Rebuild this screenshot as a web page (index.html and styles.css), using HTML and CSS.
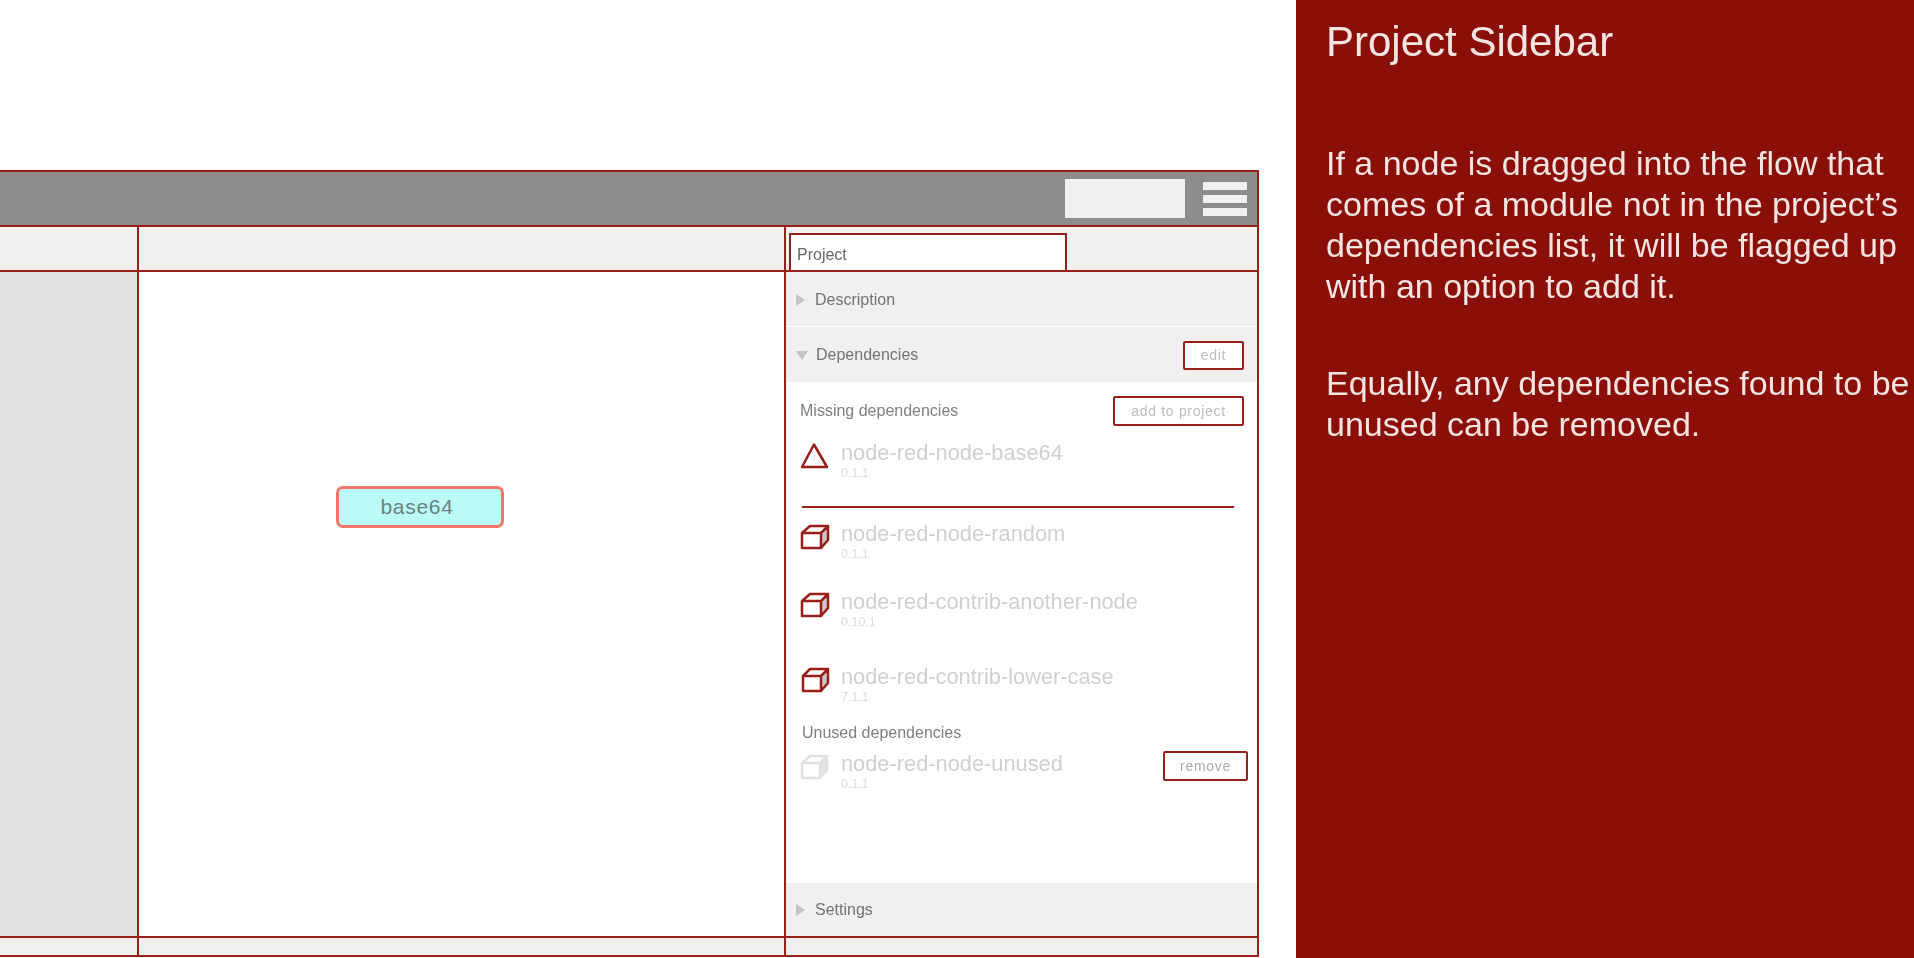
FILE: index.html
```html
<!DOCTYPE html>
<html lang="en">
<head>
    <meta charset="UTF-8">
    <meta name="viewport" content="width=device-width, initial-scale=1.0">
    <title>Project Sidebar</title>
    <link rel="stylesheet" href="styles.css">
</head>
<body>
    <div class="stage">
        <div class="window">
            <div class="header">
                <div class="search"></div>
                <div class="menu"><span></span><span></span><span></span></div>
            </div>

            <div class="row tabs">
                <div class="cell"></div>
                <div class="cell"></div>
                <div class="cell tab-cell"><div class="tab">Project</div></div>
            </div>

            <div class="row main">
                <div class="cell palette"></div>
                <div class="cell canvas">
                    <div class="node">base64</div>
                </div>
                <div class="cell sidebar">
                    <div class="section section-first"><i class="arrow"></i>Description</div>
                    <div class="section section-open">
                        <i class="arrow arrow-down"></i>Dependencies
                        <button class="btn btn-edit">edit</button>
                    </div>

                    <div class="deps">
                        <div class="deps-head">
                            <span>Missing dependencies</span>
                            <button class="btn btn-add">add to project</button>
                        </div>

                        <div class="dep dep-missing">
                            <svg class="dep-icon" width="30" height="26" viewBox="0 0 30 26">
                                <path class="line" d="M14 1.5 L27 24 H2 Z"/>
                                <path class="mark" d="M14 10 V18"/>
                            </svg>
                            <div>
                                <div class="dep-name">node-red-node-base64</div>
                                <div class="dep-version">0.1.1</div>
                            </div>
                        </div>

                        <div class="divider"></div>

                        <div class="dep dep-random">
                            <svg class="dep-icon" width="30" height="26" viewBox="0 0 30 26">
                                <path class="side" d="M21 9 L28 2 V16 L21 24 Z"/>
                                <path class="line" d="M2 9 H21 V24 H2 Z M2 9 L10 2 H28 L21 9 M28 2 V16 L21 24"/>
                            </svg>
                            <div>
                                <div class="dep-name">node-red-node-random</div>
                                <div class="dep-version">0.1.1</div>
                            </div>
                        </div>

                        <div class="dep dep-another">
                            <svg class="dep-icon" width="30" height="26" viewBox="0 0 30 26">
                                <path class="side" d="M21 9 L28 2 V16 L21 24 Z"/>
                                <path class="line" d="M2 9 H21 V24 H2 Z M2 9 L10 2 H28 L21 9 M28 2 V16 L21 24"/>
                            </svg>
                            <div>
                                <div class="dep-name">node-red-contrib-another-node</div>
                                <div class="dep-version">0.10.1</div>
                            </div>
                        </div>

                        <div class="dep dep-lower">
                            <svg class="dep-icon" width="30" height="26" viewBox="0 0 30 26">
                                <path class="side" d="M21 9 L28 2 V16 L21 24 Z"/>
                                <path class="line" d="M3 9 H21 V24 H3 Z M3 9 L10 2 H28 L21 9 M28 2 V16 L21 24"/>
                            </svg>
                            <div>
                                <div class="dep-name">node-red-contrib-lower-case</div>
                                <div class="dep-version">7.1.1</div>
                            </div>
                        </div>

                        <div class="unused-head">Unused dependencies</div>

                        <div class="dep dep-unused">
                            <svg class="dep-icon" width="30" height="26" viewBox="0 0 30 26">
                                <path class="side side-faint" d="M20 9 L27 2 V16 L20 24 Z"/>
                                <path class="line line-faint" d="M2 9 H20 V24 H2 Z M2 9 L10 2 H27 L20 9 M27 2 V16 L20 24"/>
                            </svg>
                            <div>
                                <div class="dep-name">node-red-node-unused</div>
                                <div class="dep-version">0.1.1</div>
                            </div>
                            <button class="btn btn-remove">remove</button>
                        </div>
                    </div>

                    <div class="section section-last"><i class="arrow"></i>Settings</div>
                </div>
            </div>

            <div class="row footer">
                <div class="cell"></div>
                <div class="cell"></div>
                <div class="cell"></div>
            </div>
        </div>
    </div>

    <div class="notes">
        <h1>Project Sidebar</h1>
        <p>If a node is dragged into the flow that comes of a module not in the project’s dependencies list, it will be flagged up with an option to add it.</p>
        <p>Equally, any dependencies found to be unused can be removed.</p>
    </div>
</body>
</html>
```

FILE: styles.css
```css
html, body {
    height: 100%;
}
body {
    margin: 0;
    display: flex;
    overflow: hidden;
    background-color: #fff;
    font-family: "Liberation Sans", Arial, sans-serif;
}
.stage {
    width: 1296px;
    flex: none;
    padding-top: 170px;
    filter: blur(0.7px);
}
/* window runs past the left edge of the page */
.window {
    width: 1269px;
    margin-left: -10px;
    border-top: 2px solid #981f1a;
}
.header {
    height: 53px;
    display: flex;
    align-items: center;
    justify-content: flex-end;
    padding-right: 10px;
    background-color: #8d8d8d;
    border-right: 2px solid #981f1a;
    border-bottom: 2px solid #981f1a;
}
.search {
    width: 120px;
    height: 39px;
    margin-right: 18px;
    background-color: #f0f0f0;
}
.menu {
    width: 44px;
    display: flex;
    flex-direction: column;
    gap: 5px;
}
.menu span {
    height: 8px;
    background-color: #f0f0f0;
}
.row {
    display: grid;
    grid-template-columns: 149px 647px 1fr;
    border-bottom: 2px solid #981f1a;
}
.cell {
    border-right: 2px solid #981f1a;
}
.tabs {
    height: 43px;
    background-color: #f0f0f0;
}
.tab-cell {
    padding: 6px 0 0 3px;
}
.tab {
    box-sizing: border-box;
    width: 278px;
    height: 37px;
    padding-left: 6px;
    line-height: 39px;
    font-size: 16px;
    color: #666;
    background-color: #fff;
    border: 2px solid #981f1a;
    border-bottom: none;
}
.main {
    height: 664px;
}
.palette {
    background-color: #e2e2e2;
}
.canvas {
    position: relative;
    background-color: #fff;
}
.node {
    position: absolute;
    left: 197px;
    top: 214px;
    width: 156px;
    height: 36px;
    padding-right: 6px;
    line-height: 36px;
    text-align: center;
    font-size: 21px;
    letter-spacing: 0.7px;
    color: #6a8080;
    background-color: #bbfcf7;
    border: 3px solid #f4766a;
    border-radius: 7px;
}
.sidebar {
    display: flex;
    flex-direction: column;
}
.section {
    display: flex;
    align-items: center;
    box-sizing: border-box;
    height: 54px;
    padding: 1px 13px 0 10px;
    font-size: 16px;
    color: #737373;
    background-color: #f0f0f0;
}
.section-first {
    margin-bottom: 1px;
}
.section-open {
    height: 55px;
}
.section-last {
    height: 53px;
    margin-top: auto;
}
.arrow {
    width: 0;
    height: 0;
    margin-right: 10px;
    border-left: 9px solid #c4c4c4;
    border-top: 6px solid transparent;
    border-bottom: 6px solid transparent;
}
.arrow-down {
    margin-right: 8px;
    border-top: 9px solid #c4c4c4;
    border-left: 6px solid transparent;
    border-right: 6px solid transparent;
    border-bottom: none;
}
.btn {
    height: 29px;
    padding: 0;
    font-family: inherit;
    font-size: 14px;
    letter-spacing: 0.7px;
    color: #bdbdbd;
    background-color: #fff;
    border: 2px solid #981f1a;
    border-radius: 2px;
}
.btn-edit {
    width: 61px;
    margin-left: auto;
}
.btn-add {
    width: 131px;
    height: 30px;
}
.btn-remove {
    width: 85px;
    height: 30px;
    margin: -3px -4px 0 auto;
    color: #aaa;
}
.deps {
    padding: 14px 13px 0 14px;
}
.deps-head {
    display: flex;
    align-items: center;
    justify-content: space-between;
    font-size: 16px;
    color: #808080;
}
.dep {
    display: flex;
    align-items: flex-start;
}
.dep-icon {
    flex: none;
    margin-right: 11px;
}
.line {
    fill: none;
    stroke: #981f1a;
    stroke-width: 2.5;
    stroke-linejoin: round;
}
.line-faint {
    stroke: #e0e0e0;
}
.mark {
    fill: none;
    stroke: #e4e4e4;
    stroke-width: 1;
}
.side {
    fill: #c8c8c8;
}
.side-faint {
    fill: #e4e4e4;
}
.dep-name {
    height: 21px;
    line-height: 20px;
    font-size: 21.8px;
    color: #d0d0d0;
}
.dep-version {
    height: 19px;
    line-height: 18px;
    font-size: 12.5px;
    color: #dcdcdc;
}
.dep-missing {
    margin-top: 17px;
}
.divider {
    height: 2px;
    margin: 23px 10px 0 2px;
    background-color: #981f1a;
}
.dep-random {
    margin-top: 16px;
}
.dep-another {
    margin-top: 28px;
}
.dep-lower {
    margin-top: 35px;
}
.unused-head {
    height: 20px;
    margin: 16px 0 0 2px;
    line-height: 19px;
    font-size: 16px;
    color: #808080;
}
.dep-unused {
    margin-top: 11px;
}
.footer {
    height: 17px;
    background-color: #f0f0f0;
}
.notes {
    flex: 1;
    min-width: 0;
    padding: 0 0 0 30px;
    color: #f4e4e2;
    background-color: #8a0f08;
}
.notes h1, .notes p {
    filter: blur(0.5px);
}
.notes h1 {
    margin: 18px 0 0;
    height: 48px;
    line-height: 48px;
    font-size: 42px;
    font-weight: normal;
}
.notes p {
    margin: 77px 0 0;
    font-size: 34px;
    line-height: 41px;
}
.notes p + p {
    margin-top: 56px;
}
```
